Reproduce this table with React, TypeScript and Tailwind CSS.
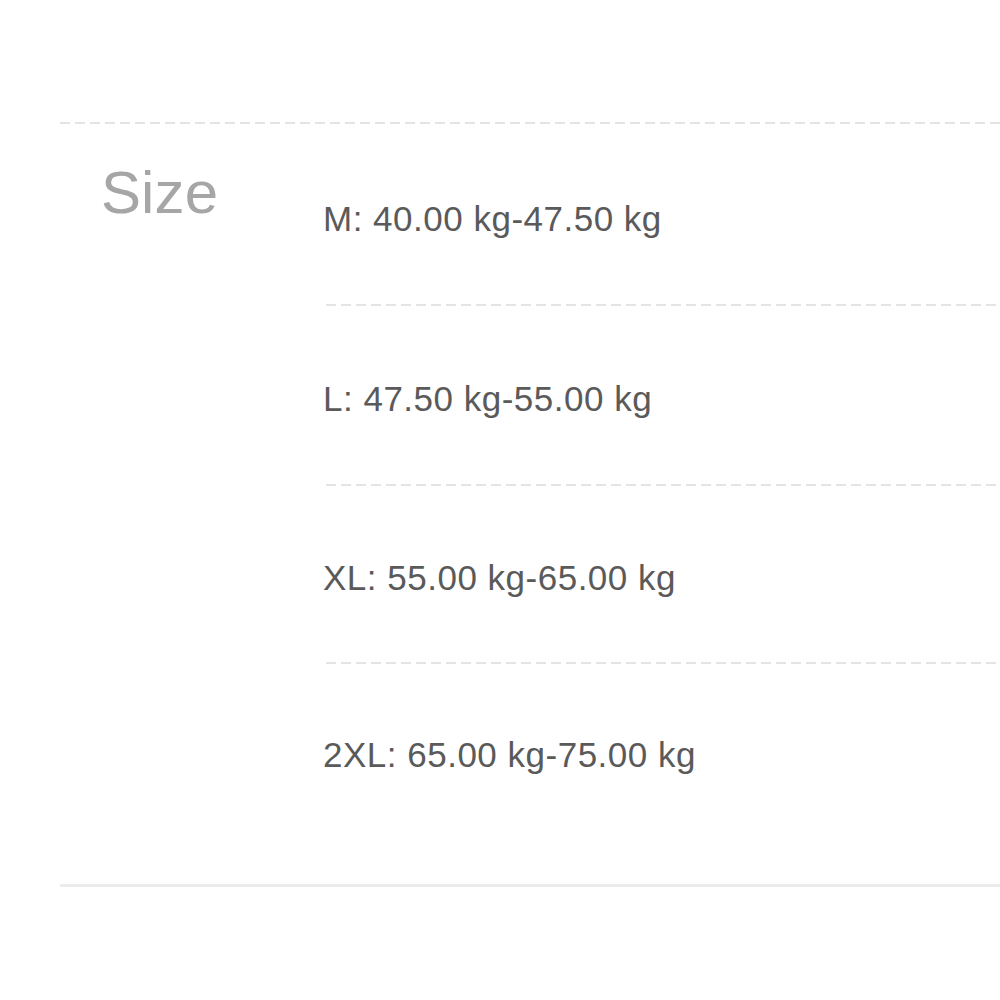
import React from "react";

interface SizeRow {
  label: string;
  range: string;
  pad: string;
  last?: boolean;
}

const rows: SizeRow[] = [
  { label: "M", range: "40.00 kg-47.50 kg", pad: "pt-[75px] pb-[65px]" },
  { label: "L", range: "47.50 kg-55.00 kg", pad: "pt-[73px] pb-[65px]" },
  { label: "XL", range: "55.00 kg-65.00 kg", pad: "pt-[72px] pb-[64px]" },
  { label: "2XL", range: "65.00 kg-75.00 kg", pad: "pt-[71px] pb-[109px]", last: true },
];

// dashed rule: 10px dash, 5px gap
function Dashes({ className = "" }: { className?: string }) {
  return (
    <div
      className={`h-[2px] bg-[repeating-linear-gradient(to_right,#e4e4e4_0,#e4e4e4_10px,transparent_10px,transparent_15px)] ${className}`}
    />
  );
}

export default function App() {
  return (
    <div className="w-[1000px] h-[1000px] bg-white pt-[122px] pl-[60px] font-['Liberation_Sans',Arial,sans-serif] overflow-hidden">
      <Dashes />

      <div className="flex">
        {/* label column */}
        <div className="w-[263px] shrink-0 pl-[41px] pt-[39px]">
          <span className="text-[60px] leading-none tracking-[0.1px] text-[#a6a6a6]">
            Size
          </span>
        </div>

        {/* values */}
        <div className="flex-1 flex flex-col">
          {rows.map((row) => (
            <div key={row.label}>
              <div className={row.pad}>
                <p className="text-[35px] leading-[40px] tracking-[0.5px] text-[#5a5a5a] whitespace-nowrap">
                  {row.label}: {row.range}
                </p>
              </div>
              {!row.last && <Dashes className="ml-[3px]" />}
            </div>
          ))}
        </div>
      </div>

      <div className="h-[3px] bg-[#ebebeb]" />
    </div>
  );
}
